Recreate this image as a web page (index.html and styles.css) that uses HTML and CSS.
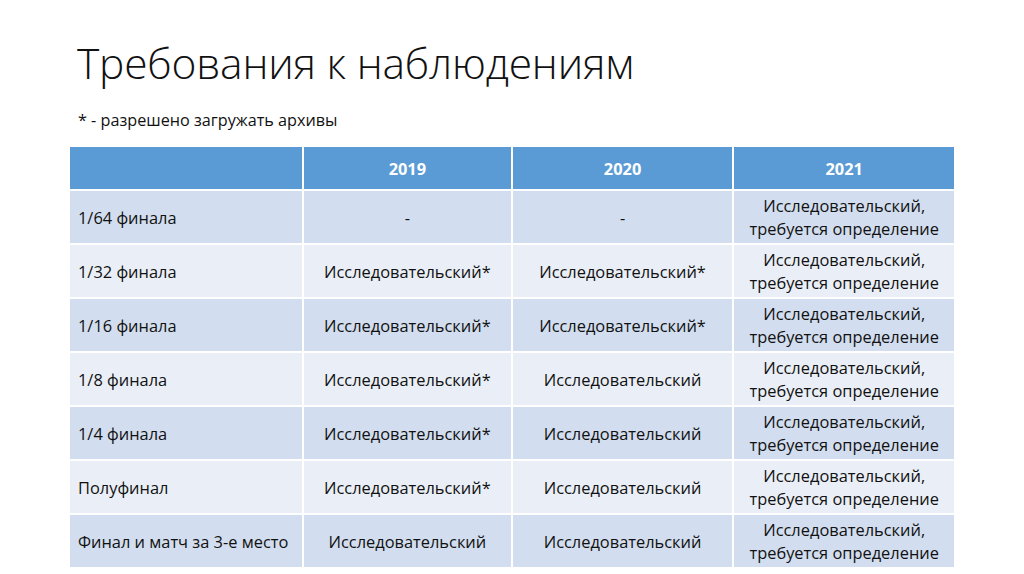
FILE: index.html
```html
<!DOCTYPE html>
<html lang="ru">
<head>
<meta charset="utf-8">
<link rel="stylesheet" href="styles.css">
</head>
<body>
<div class="slide">
  <h1 class="title">Требования к наблюдениям</h1>
  <p class="note">* - разрешено загружать архивы</p>
  <table class="grid">
    <colgroup>
      <col class="c1"><col class="c2"><col class="c3"><col class="c4">
    </colgroup>
    <thead>
      <tr><th></th><th>2019</th><th>2020</th><th>2021</th></tr>
    </thead>
    <tbody>
      <tr><td class="stage">1/64 финала</td><td>-</td><td>-</td><td>Исследовательский,<br>требуется определение</td></tr>
      <tr><td class="stage">1/32 финала</td><td>Исследовательский*</td><td>Исследовательский*</td><td>Исследовательский,<br>требуется определение</td></tr>
      <tr><td class="stage">1/16 финала</td><td>Исследовательский*</td><td>Исследовательский*</td><td>Исследовательский,<br>требуется определение</td></tr>
      <tr><td class="stage">1/8 финала</td><td>Исследовательский*</td><td>Исследовательский</td><td>Исследовательский,<br>требуется определение</td></tr>
      <tr><td class="stage">1/4 финала</td><td>Исследовательский*</td><td>Исследовательский</td><td>Исследовательский,<br>требуется определение</td></tr>
      <tr><td class="stage">Полуфинал</td><td>Исследовательский*</td><td>Исследовательский</td><td>Исследовательский,<br>требуется определение</td></tr>
      <tr><td class="stage">Финал и матч за 3-е место</td><td>Исследовательский</td><td>Исследовательский</td><td>Исследовательский,<br>требуется определение</td></tr>
    </tbody>
  </table>
</div>
</body>
</html>
```
FILE: styles.css
```css
html, body {
  margin: 0;
  padding: 0;
  background: #ffffff;
}
.slide {
  width: 1024px;
  height: 574px;
  overflow: hidden;
  font-family: "Open Sans", "Noto Sans", sans-serif;
  color: #111111;
}
.title {
  margin: 0;
  padding: 37px 0 0 77px;
  font-size: 42.5px;
  font-weight: 300;
  line-height: 52px;
  color: #111111;
  letter-spacing: -0.2px;
}
.note {
  margin: 0;
  padding: 20px 0 0 78px;
  font-size: 16.2px;
  line-height: 22px;
}
.grid {
  margin: 14px 0 0 68px;
  border-collapse: collapse;
  width: 888px;
  font-size: 16.4px;
  line-height: 23px;
}
.c1 { width: 235px; }
.c2 { width: 209px; }
.c3 { width: 222px; }
.c4 { width: 222px; }
.grid th, .grid td {
  border: 2px solid #ffffff;
  text-align: center;
  padding: 0 2px;
}
.grid th {
  background: #5b9bd5;
  color: #ffffff;
  font-weight: 700;
  height: 42px;
}
.grid td {
  height: 52px;
}
.grid tbody tr:nth-child(odd) td { background: #d2deef; }
.grid tbody tr:nth-child(even) td { background: #eaeff7; }
.grid td.stage {
  text-align: left;
  padding-left: 8px;
}
```
